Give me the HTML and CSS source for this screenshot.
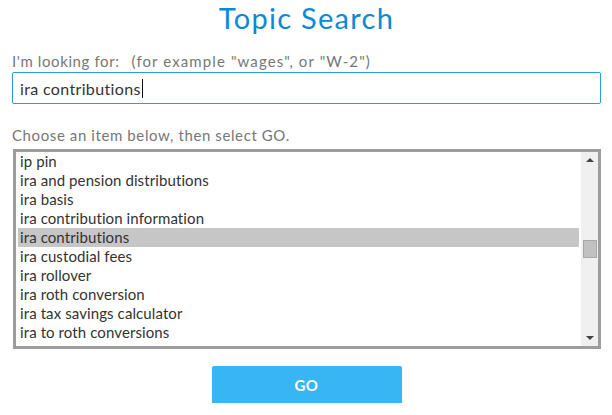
FILE: index.html
```html
<!DOCTYPE html>
<html>
<head>
<meta charset="utf-8">
<link rel="stylesheet" href="styles.css">
</head>
<body>
<div class="page">
  <h1 class="title">Topic Search</h1>
  <div class="label"><span>I'm looking for:</span><span class="hint">(for example "wages", or "W-2")</span></div>
  <div class="input"><span>ira contributions</span><span class="caret"></span></div>
  <div class="label choose">Choose an item below, then select GO.</div>
  <div class="listbox">
    <div class="items">
      <div class="item">ip pin</div>
      <div class="item">ira and pension distributions</div>
      <div class="item">ira basis</div>
      <div class="item">ira contribution information</div>
      <div class="item selected">ira contributions</div>
      <div class="item">ira custodial fees</div>
      <div class="item">ira rollover</div>
      <div class="item">ira roth conversion</div>
      <div class="item">ira tax savings calculator</div>
      <div class="item">ira to roth conversions</div>
      <div class="item">ira deduction</div>
    </div>
    <div class="scrollbar">
      <div class="arrow up"></div>
      <div class="track"><div class="thumb"></div></div>
      <div class="arrow down"></div>
    </div>
  </div>
  <div class="actions"><div class="go">GO</div></div>
</div>
</body>
</html>
```
FILE: styles.css
```css
html, body {
  margin: 0;
  padding: 0;
  background: #fff;
}
body {
  font-family: Lato, "Open Sans", sans-serif;
  color: #333;
}
.page {
  padding: 0 11px 0 12px;
  display: flex;
  flex-direction: column;
}
.title {
  margin: 0;
  font-weight: 400;
  font-size: 29px;
  line-height: 36px;
  letter-spacing: 1.3px;
  color: #0a89d4;
  text-align: center;
}
.label {
  margin-top: 16px;
  font-size: 15px;
  line-height: 18px;
  letter-spacing: 0.6px;
  color: #777;
  display: flex;
}
.hint {
  margin-left: 12px;
  letter-spacing: 1.1px;
}
.input {
  margin-top: 2px;
  height: 30px;
  border: 1px solid #2a9be0;
  border-radius: 2px;
  display: flex;
  align-items: center;
  padding-left: 7px;
  font-size: 16px;
  letter-spacing: 0.35px;
  color: #333;
}
.caret {
  width: 1px;
  height: 19px;
  background: #111;
  margin-left: 1px;
}
.choose {
  margin-top: 22px;
}
.listbox {
  margin-top: 5px;
  margin-left: 1px;
  height: 194px;
  border: 3px solid #9d9d9d;
  display: flex;
  overflow: hidden;
}
.items {
  flex: 1;
  padding: 0 2px 0 2px;
  overflow: hidden;
}
.item {
  height: 19px;
  line-height: 18px;
  font-size: 15px;
  letter-spacing: 0.1px;
  padding-left: 2px;
  color: #333;
  white-space: nowrap;
}
.item.selected {
  background: #c6c6c6;
}
.scrollbar {
  width: 17px;
  background: #f0f0f0;
  display: flex;
  flex-direction: column;
  align-items: center;
}
.arrow {
  width: 0;
  height: 0;
  border-left: 4px solid transparent;
  border-right: 4px solid transparent;
}
.arrow.up {
  margin-top: 6px;
  border-bottom: 4px solid #444;
}
.arrow.down {
  margin-bottom: 6px;
  border-top: 4px solid #444;
}
.track {
  flex: 1;
  width: 100%;
  display: flex;
  flex-direction: column;
  align-items: center;
}
.thumb {
  margin-top: 78px;
  width: 12px;
  height: 16px;
  background: #c1c1c1;
  border: 1px solid #a8a8a8;
}
.actions {
  display: flex;
  justify-content: center;
  margin-top: 17px;
}
.go {
  width: 190px;
  height: 37px;
  background: #38b5f3;
  border-radius: 2px;
  box-shadow: 0 1px 1px #888;
  color: #fff;
  font-size: 15px;
  font-weight: 700;
  display: flex;
  align-items: center;
  justify-content: center;
  letter-spacing: 0.5px;
}
```
